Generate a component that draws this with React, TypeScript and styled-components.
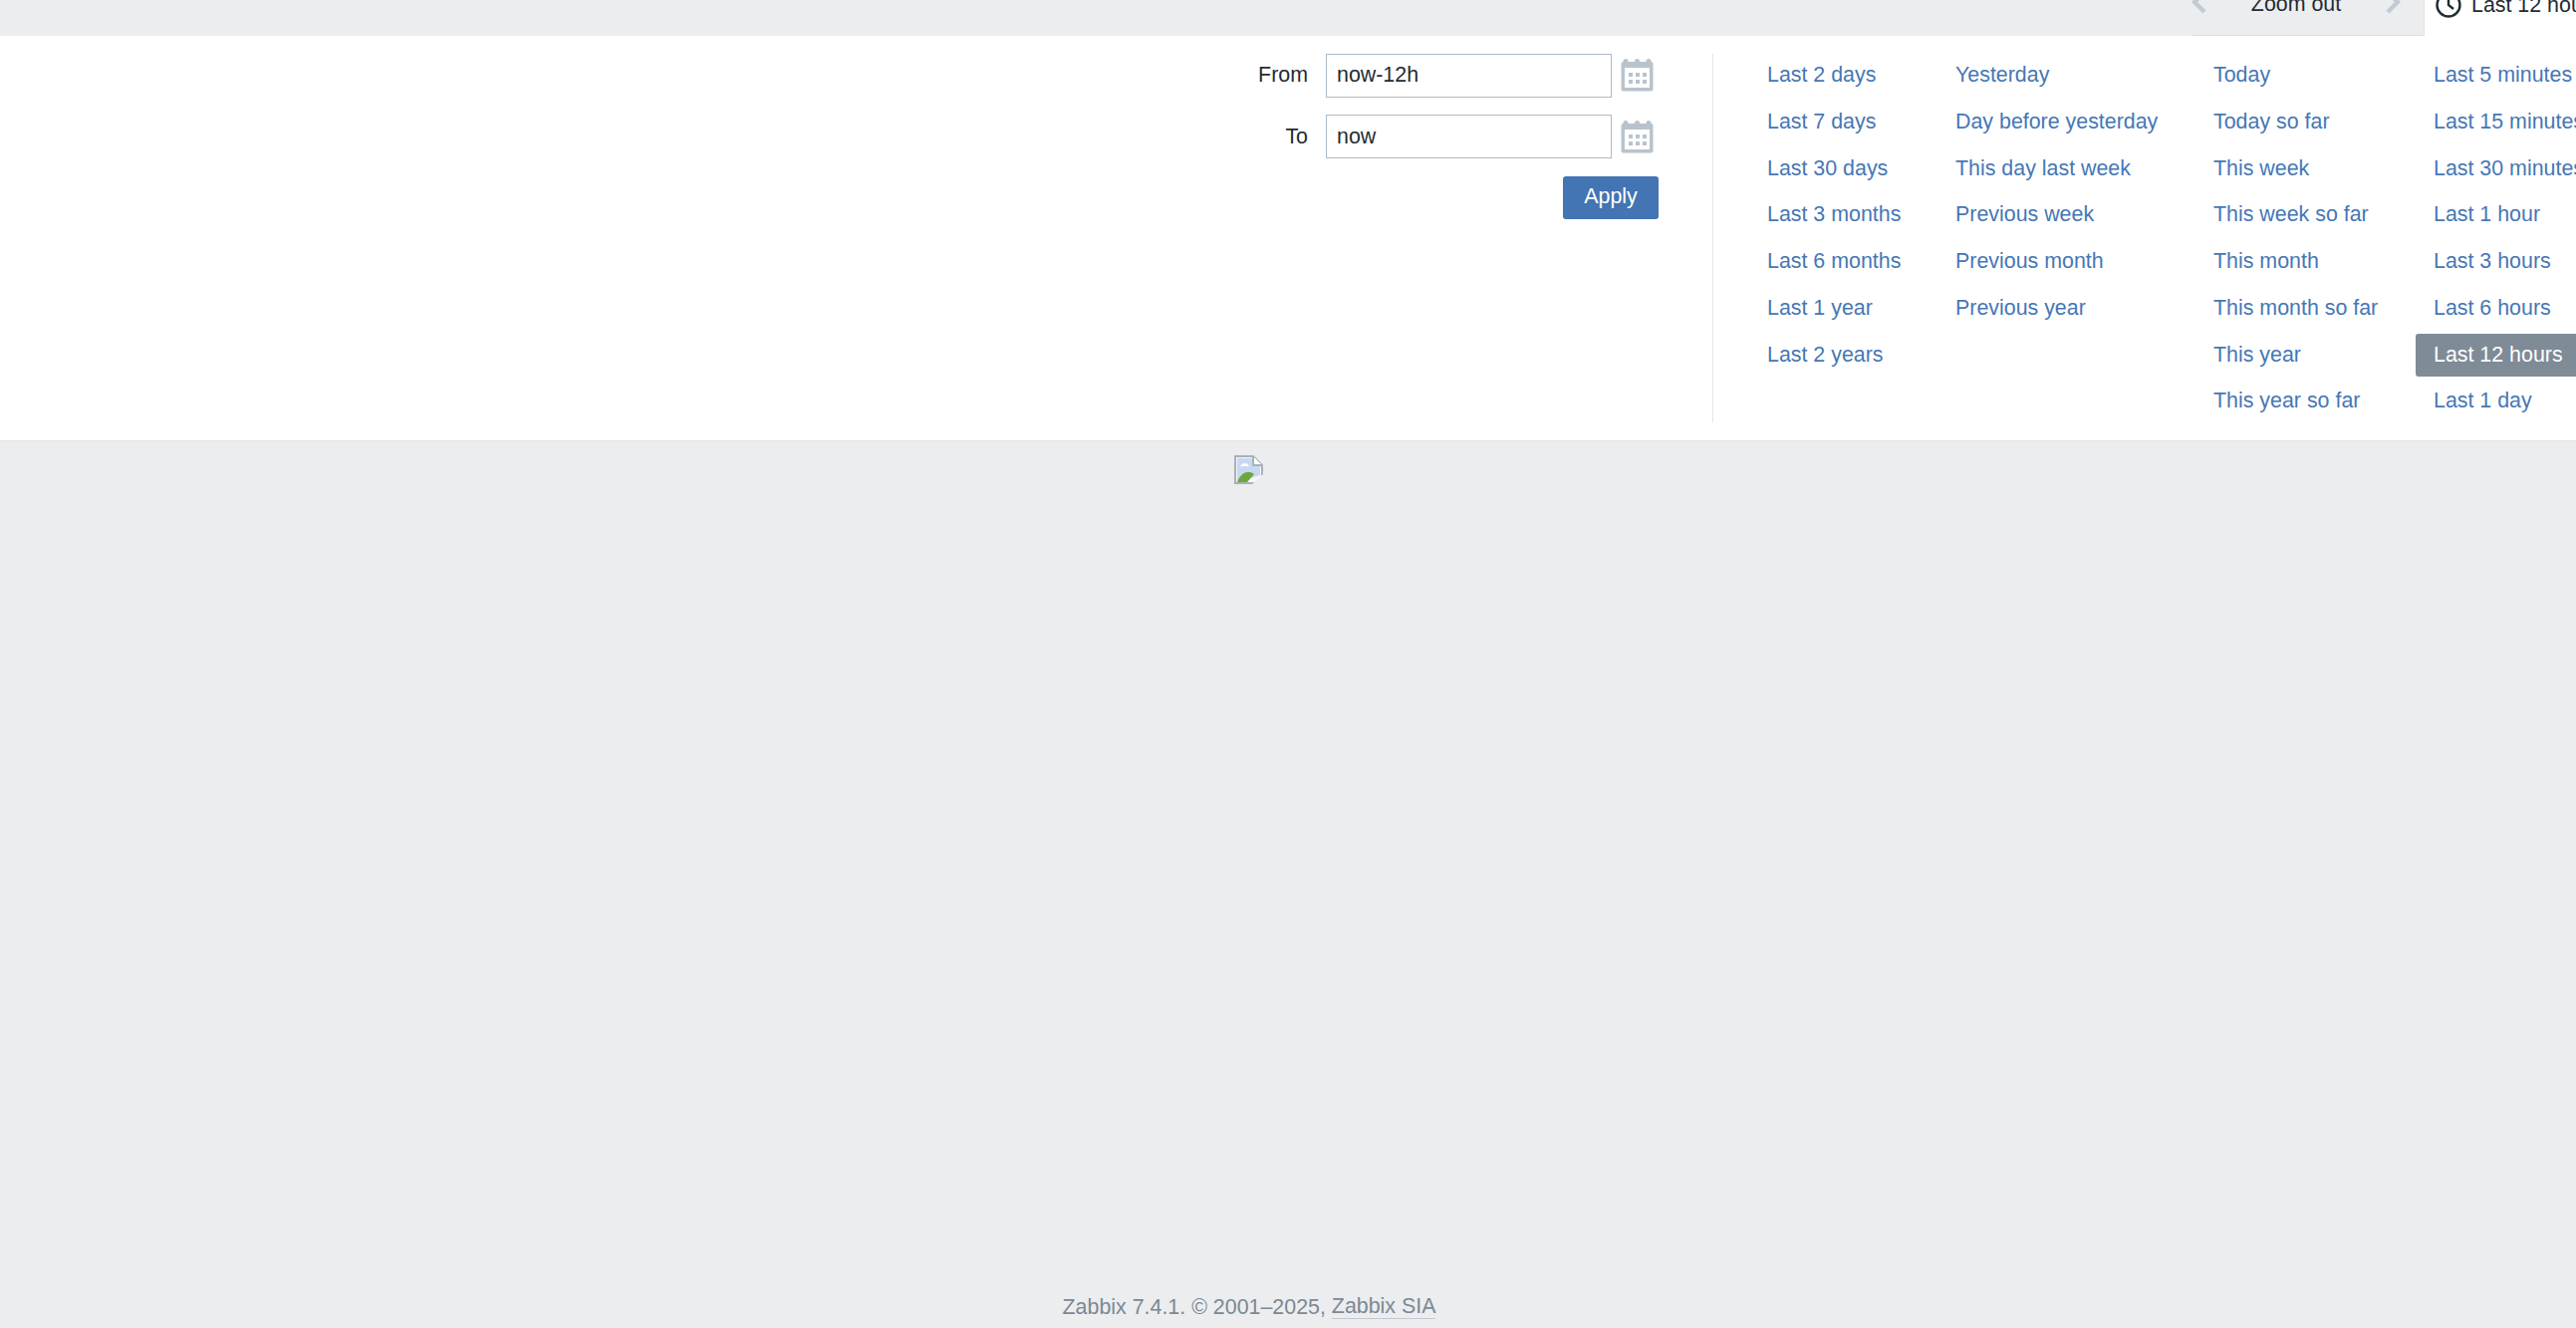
import React from "react";
import styled, { createGlobalStyle } from "styled-components";

const Global = createGlobalStyle`
  html, body { margin: 0; padding: 0; background: #ebedef; }
  body { font-family: "Liberation Sans", Arial, sans-serif; font-size: 21.4px; color: #1f2c33; }
`;

const Page = styled.div`
  height: 100vh;
  display: flex;
  flex-direction: column;
  overflow: hidden;
`;

const TopBar = styled.div`
  height: 36px;
  flex: none;
  display: flex;
  justify-content: flex-end;
  overflow: hidden;
`;

const ZoomNav = styled.div`
  height: 35px;
  width: 233px;
  display: flex;
  align-items: center;
  border-bottom: 1px solid #dfe1e3;
`;

const ZoomInner = styled.div`
  display: flex;
  align-items: center;
  margin-top: -26px;
`;

const Chevron = styled.svg`
  width: 16px;
  height: 26px;
  flex: none;
  color: #c3cbd2;
  position: relative;
  top: -3px;
`;

const ZoomLabel = styled.span`
  width: 178px;
  text-align: center;
  white-space: nowrap;
`;

const TimeTab = styled.div`
  width: 153px;
  height: 36px;
  background: #fff;
  border-left: 1px solid #dfe1e3;
  box-sizing: border-box;
  padding-left: 11px;
  display: flex;
  align-items: center;
  white-space: nowrap;
  overflow: hidden;
`;

const TimeTabInner = styled.div`
  display: flex;
  align-items: center;
  gap: 10px;
  margin-top: -26px;
`;

const Panel = styled.section`
  height: 406px;
  flex: none;
  background: #fff;
  border-bottom: 1px solid #dfe1e3;
  display: flex;
  overflow: hidden;
`;

const FormColumn = styled.form`
  width: 1719px;
  flex: none;
  box-sizing: border-box;
  padding: 18px 54px 0 0;
  display: flex;
  flex-direction: column;
  align-items: flex-end;
  gap: 17.5px;
`;

const FormRow = styled.div`
  display: flex;
  align-items: center;
`;

const FieldLabel = styled.label`
  margin-right: 18px;
`;

const DateInput = styled.input`
  width: 287px;
  height: 43.75px;
  box-sizing: border-box;
  border: 1px solid #acbbc7;
  background: #fff;
  padding: 0 10px;
  margin: 0;
  font: inherit;
  color: #1f2c33;
  outline: none;
`;

const CalendarButton = styled.span`
  width: 38px;
  margin-left: 9px;
  display: flex;
  align-items: center;
`;

const ApplyButton = styled.button`
  width: 96px;
  height: 43px;
  border: 0;
  border-radius: 3px;
  background: #4374b3;
  color: #fff;
  font: inherit;
  padding: 0 0 2px;
`;

const Divider = styled.div`
  width: 1px;
  flex: none;
  margin: 18px 0;
  background: #e3e5e7;
`;

const Presets = styled.div`
  display: flex;
  padding: 18px 0 0 36px;
  flex: none;
`;

const PresetColumn = styled.div<{ $w: number }>`
  width: ${(p) => p.$w}px;
  flex: none;
  display: flex;
  flex-direction: column;
`;

const PresetLink = styled.a<{ $active?: boolean }>`
  display: block;
  height: 43px;
  line-height: 42px;
  margin-bottom: 3.75px;
  padding: 0 18px;
  white-space: nowrap;
  border-radius: 3px;
  color: ${(p) => (p.$active ? "#fff" : "#4677b5")};
  background: ${(p) => (p.$active ? "#7f8b97" : "transparent")};
`;

const Centered = styled.div`
  width: 2508px;
  display: flex;
  justify-content: center;
`;

const Main = styled(Centered)`
  flex: 1;
  min-height: 0;
  padding-top: 14px;
  align-items: flex-start;
`;

const Footer = styled(Centered)`
  height: 41px;
  flex: none;
  color: #7c8894;
  line-height: 40px;
  white-space: pre;
`;

const FooterLink = styled.a`
  line-height: 1;
  align-self: center;
  border-bottom: 1px solid #c0c8d2;
`;

const ChevronIcon = ({ right }: { right?: boolean }) => (
  <Chevron viewBox="0 0 16 26">
    <path d={right ? "M3 3l10 10L3 23" : "M13 3L3 13l10 10"} fill="none" stroke="currentColor" strokeWidth="4.4" />
  </Chevron>
);

const ClockIcon = () => (
  <svg width="26" height="26" viewBox="0 0 26 26">
    <circle cx="13" cy="13" r="11.5" fill="none" stroke="#1f2c33" strokeWidth="2.4" />
    <path d="M13 6v7l5 4" fill="none" stroke="#1f2c33" strokeWidth="2.4" />
  </svg>
);

const CalendarIcon = () => (
  <svg width="33" height="33" viewBox="0 0 33 33">
    <rect x="0.5" y="3" width="32" height="29.5" rx="2" fill="#b9c3cc" />
    <rect x="4" y="9" width="25" height="20" fill="#fff" />
    <rect x="2.5" y="0" width="5" height="6" rx="2.5" fill="#b9c3cc" />
    <rect x="14" y="0" width="5" height="6" rx="2.5" fill="#b9c3cc" />
    <rect x="25.5" y="0" width="5" height="6" rx="2.5" fill="#b9c3cc" />
    {[8, 15, 22].flatMap((x) =>
      [14, 21].map((y) => <rect key={`${x}-${y}`} x={x} y={y} width="4" height="4" fill="#b9c3cc" />)
    )}
  </svg>
);

const BrokenImage = () => (
  <svg width="30" height="30" viewBox="0 0 30 30">
    <path d="M1 1h18l9 9v18H1z" fill="#f4f6f8" stroke="#a9b0b8" strokeWidth="2" />
    <path d="M3 3h15v8h8v9L3 27z" fill="#c9d8f2" />
    <path d="M6 11c2-4 7-4 9 0z" fill="#fff" />
    <path d="M3 27c3-9 11-13 17-8l-7 8z" fill="#6aa83c" />
    <path d="M17 30L30 18v12z" fill="#ebedef" />
    <path d="M19 1v9h9" fill="#fff" stroke="#a9b0b8" strokeWidth="2" />
  </svg>
);

const columns: { w: number; items: string[] }[] = [
  { w: 189, items: ["Last 2 days", "Last 7 days", "Last 30 days", "Last 3 months", "Last 6 months", "Last 1 year", "Last 2 years"] },
  { w: 259, items: ["Yesterday", "Day before yesterday", "This day last week", "Previous week", "Previous month", "Previous year"] },
  { w: 221, items: ["Today", "Today so far", "This week", "This week so far", "This month", "This month so far", "This year", "This year so far"] },
  { w: 170, items: ["Last 5 minutes", "Last 15 minutes", "Last 30 minutes", "Last 1 hour", "Last 3 hours", "Last 6 hours", "Last 12 hours", "Last 1 day"] },
];

export default function App() {
  return (
    <Page>
      <Global />
      <TopBar>
        <ZoomNav>
          <ZoomInner>
            <ChevronIcon />
            <ZoomLabel>Zoom out</ZoomLabel>
            <ChevronIcon right />
          </ZoomInner>
        </ZoomNav>
        <TimeTab>
          <TimeTabInner>
            <ClockIcon />
            <span>Last 12 hours</span>
          </TimeTabInner>
        </TimeTab>
      </TopBar>
      <Panel>
        <FormColumn>
          <FormRow>
            <FieldLabel>From</FieldLabel>
            <DateInput defaultValue="now-12h" />
            <CalendarButton><CalendarIcon /></CalendarButton>
          </FormRow>
          <FormRow>
            <FieldLabel>To</FieldLabel>
            <DateInput defaultValue="now" />
            <CalendarButton><CalendarIcon /></CalendarButton>
          </FormRow>
          <ApplyButton type="button">Apply</ApplyButton>
        </FormColumn>
        <Divider />
        <Presets>
          {columns.map((c) => (
            <PresetColumn key={c.items[0]} $w={c.w}>
              {c.items.map((t) => (
                <PresetLink key={t} $active={t === "Last 12 hours"}>{t}</PresetLink>
              ))}
            </PresetColumn>
          ))}
        </Presets>
      </Panel>
      <Main><BrokenImage /></Main>
      <Footer>
        Zabbix 7.4.1. © 2001–2025, <FooterLink>Zabbix SIA</FooterLink>
      </Footer>
    </Page>
  );
}
